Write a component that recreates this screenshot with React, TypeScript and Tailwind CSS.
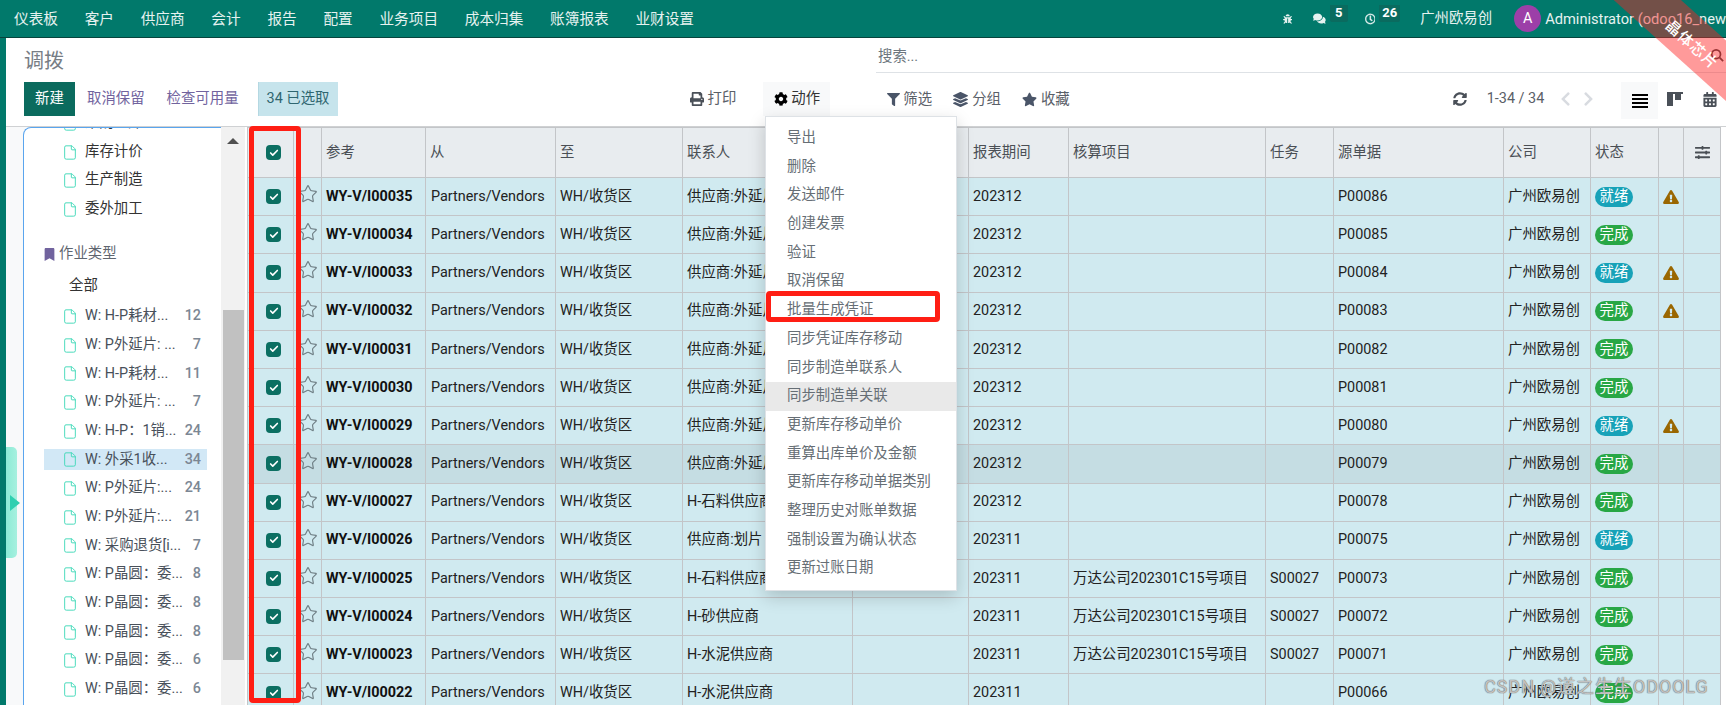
import { File, Star, Check } from 'lucide-react';
import {
  FaBug,
  FaComments,
  FaRegClock,
  FaPrint,
  FaCog,
  FaFilter,
  FaLayerGroup,
  FaStar,
  FaSyncAlt,
  FaChevronLeft,
  FaChevronRight,
  FaCalendarAlt,
  FaExclamationTriangle,
  FaBookmark,
  FaSlidersH,
} from 'react-icons/fa';

const navItems = ['仪表板', '客户', '供应商', '会计', '报告', '配置', '业务项目', '成本归集', '账簿报表', '业财设置'];

const categories = [
  ['W: H-P耗材...', '12'],
  ['W: P外延片: ...', '7'],
  ['W: H-P耗材...', '11'],
  ['W: P外延片: ...', '7'],
  ['W: H-P：1销...', '24'],
  ['W: 外采1收...', '34'],
  ['W: P外延片:...', '24'],
  ['W: P外延片:...', '21'],
  ['W: 采购退货[i...', '7'],
  ['W: P晶圆：委...', '8'],
  ['W: P晶圆：委...', '8'],
  ['W: P晶圆：委...', '8'],
  ['W: P晶圆：委...', '6'],
  ['W: P晶圆：委...', '6'],
];

const menuItems = [
  '导出',
  '删除',
  '发送邮件',
  '创建发票',
  '验证',
  '取消保留',
  '批量生成凭证',
  '同步凭证库存移动',
  '同步制造单联系人',
  '同步制造单关联',
  '更新库存移动单价',
  '重算出库单价及金额',
  '更新库存移动单据类别',
  '整理历史对账单数据',
  '强制设置为确认状态',
  '更新过账日期',
];

const columns = ['', '', '参考', '从', '至', '联系人', '', '报表期间', '核算项目', '任务', '源单据', '公司', '状态', '', ''];

const project = '万达公司202301C15号项目';

type Row = {
  id: string;
  partner: string;
  period: string;
  project?: string;
  task?: string;
  origin: string;
  ready?: boolean;
  warn?: boolean;
  hover?: boolean;
};

const rows: Row[] = [
  { id: 'WY-V/I00035', partner: '供应商:外延片', period: '202312', origin: 'P00086', ready: true, warn: true },
  { id: 'WY-V/I00034', partner: '供应商:外延片', period: '202312', origin: 'P00085' },
  { id: 'WY-V/I00033', partner: '供应商:外延片', period: '202312', origin: 'P00084', ready: true, warn: true },
  { id: 'WY-V/I00032', partner: '供应商:外延片', period: '202312', origin: 'P00083', warn: true },
  { id: 'WY-V/I00031', partner: '供应商:外延片', period: '202312', origin: 'P00082' },
  { id: 'WY-V/I00030', partner: '供应商:外延片', period: '202312', origin: 'P00081' },
  { id: 'WY-V/I00029', partner: '供应商:外延片', period: '202312', origin: 'P00080', ready: true, warn: true },
  { id: 'WY-V/I00028', partner: '供应商:外延片', period: '202312', origin: 'P00079', hover: true },
  { id: 'WY-V/I00027', partner: 'H-石料供应商', period: '202312', origin: 'P00078' },
  { id: 'WY-V/I00026', partner: '供应商:划片', period: '202311', origin: 'P00075', ready: true },
  { id: 'WY-V/I00025', partner: 'H-石料供应商', period: '202311', project, task: 'S00027', origin: 'P00073' },
  { id: 'WY-V/I00024', partner: 'H-砂供应商', period: '202311', project, task: 'S00027', origin: 'P00072' },
  { id: 'WY-V/I00023', partner: 'H-水泥供应商', period: '202311', project, task: 'S00027', origin: 'P00071' },
  { id: 'WY-V/I00022', partner: 'H-水泥供应商', period: '202311', origin: 'P00066' },
];

function CheckBox() {
  return (
    <div className="ml-[18px] w-[15px] h-[15px] rounded-[4px] bg-[#0b6f62] flex items-center justify-center">
      <Check className="w-[10px] h-[10px] text-white" strokeWidth={4} />
    </div>
  );
}

function SideRow({ name, count, active }: { name: string; count: string; active: boolean }) {
  return (
    <div className="h-[28.7px] flex items-center pl-[20px] pr-[14px]">
      <div className={`h-[21px] w-full flex items-center pl-[20px] pr-[6px] ${active ? 'bg-[#d2e8f6]' : ''}`}>
        <File className="w-[16px] h-[17px] shrink-0 -ml-[2px] text-[#3fd8b8]" strokeWidth={1.4} />
        <span className="ml-[7px] pb-[1px] flex-1 whitespace-nowrap text-[#48505a]">{name}</span>
        <span className="pb-[1px] font-medium text-[#7c8794]">{count}</span>
      </div>
    </div>
  );
}

function Sidebar() {
  return (
    <div className="w-[241px] shrink-0 flex bg-[#f8f9fa] overflow-hidden">
      <div className="ml-[17px] w-[199px] bg-white border-l border-t border-[#5aa5ee] rounded-tl-[8px] overflow-hidden">
        <div className="-mt-[19px]">
          <div className="h-[28.7px] flex items-center pl-[38px] gap-[7px]">
            <File className="w-[16px] h-[17px] text-[#3fd8b8]" strokeWidth={1.4} />
            <span className="pb-[1px] text-[#333]">采购入库</span>
          </div>
          {['库存计价', '生产制造', '委外加工'].map((t) => (
            <div key={t} className="h-[28.7px] flex items-center pl-[38px] gap-[7px]">
              <File className="w-[16px] h-[17px] text-[#3fd8b8]" strokeWidth={1.4} />
              <span className="pb-[1px] text-[#333]">{t}</span>
            </div>
          ))}
        </div>
        <div className="mt-[16px] h-[28.7px] flex items-center pl-[20px] text-[#5f6670]">
          <FaBookmark className="w-[11px] h-[13px] text-[#71639e]" />
          <span className="ml-[4px] pb-[1px]">作业类型</span>
        </div>
        <div className="mt-[4px] h-[28.7px] flex items-center pl-[45px] pb-[1px] text-[#333]">全部</div>
        <div className="mt-[1px]">
          {categories.map(([name, count], i) => (
            <SideRow key={i} name={name} count={count} active={i === 5} />
          ))}
        </div>
      </div>
      <div className="w-[24px] shrink-0 bg-[#f1f1f1] flex flex-col items-center">
        <div className="mt-[11px] w-0 h-0 border-x-[6px] border-x-transparent border-b-[6px] border-b-[#505050]" />
        <div className="mt-[166px] w-[21px] h-[350px] bg-[#c1c1c1]" />
      </div>
      <div className="w-[2px] shrink-0 bg-white" />
    </div>
  );
}

function StockTable() {
  return (
    <table className="table-fixed border-collapse w-[1473px] text-[#222]">
      <colgroup>
        <col className="w-[46px]" />
        <col className="w-[28px]" />
        <col className="w-[104px]" />
        <col className="w-[130px]" />
        <col className="w-[127px]" />
        <col className="w-[170px]" />
        <col className="w-[116px]" />
        <col className="w-[100px]" />
        <col className="w-[197px]" />
        <col className="w-[68px]" />
        <col className="w-[170px]" />
        <col className="w-[87px]" />
        <col className="w-[68px]" />
        <col className="w-[25px]" />
        <col className="w-[37px]" />
      </colgroup>
      <thead>
        <tr className="h-[50px] bg-[#e8ecef]">
          {columns.map((c, i) => (
            <th key={i} className={`border border-[#c3c5c8] text-left font-normal text-[#4a4f55] ${i === 0 ? '' : 'px-[4px]'}`}>
              {i === 0 && <CheckBox />}
              {i === 14 && <FaSlidersH className="w-[15px] h-[15px] mx-auto text-[#4a4f55]" />}
              {c}
            </th>
          ))}
        </tr>
      </thead>
      <tbody>
        {rows.map((r) => (
          <tr key={r.id} className={`h-[38.2px] ${r.hover ? 'bg-[#c5dde3]' : 'bg-[#d0eaf0]'}`}>
            <td className="border border-[#c3c5c8]">
              <CheckBox />
            </td>
            <td className="border border-[#c3c5c8]">
              <Star className="w-[20px] h-[20px] mx-auto -mt-[5px] text-[#6f7f85]" strokeWidth={1.4} />
            </td>
            <td className="border border-[#c3c5c8] px-[4px] font-bold text-[#111] whitespace-nowrap">{r.id}</td>
            <td className="border border-[#c3c5c8] px-[5px] whitespace-nowrap">Partners/Vendors</td>
            <td className="border border-[#c3c5c8] px-[4px] whitespace-nowrap">WH/收货区</td>
            <td className="border border-[#c3c5c8] px-[4px] whitespace-nowrap">{r.partner}</td>
            <td className="border border-[#c3c5c8]" />
            <td className="border border-[#c3c5c8] px-[4px]">{r.period}</td>
            <td className="border border-[#c3c5c8] px-[4px] whitespace-nowrap">{r.project}</td>
            <td className="border border-[#c3c5c8] px-[4px]">{r.task}</td>
            <td className="border border-[#c3c5c8] px-[4px]">{r.origin}</td>
            <td className="border border-[#c3c5c8] px-[4px] whitespace-nowrap">广州欧易创</td>
            <td className="border border-[#c3c5c8] px-[4px]">
              <span
                className={`inline-flex items-center justify-center w-[38px] h-[20px] rounded-full text-white ${
                  r.ready ? 'bg-[#17a2b8]' : 'bg-[#28a745]'
                }`}
              >
                {r.ready ? '就绪' : '完成'}
              </span>
            </td>
            <td className="border border-[#c3c5c8]">
              {r.warn && <FaExclamationTriangle className="w-[16px] h-[14px] mx-auto text-[#9a6700]" />}
            </td>
            <td className="border border-[#c3c5c8]" />
          </tr>
        ))}
      </tbody>
    </table>
  );
}

export default function App() {
  return (
    <div className="relative w-screen h-screen overflow-hidden flex flex-col bg-white text-[14.4px] font-['Roboto','Noto_Sans_CJK_SC',sans-serif]">
      {/* Top navbar */}
      <div className="h-[38px] shrink-0 flex items-center bg-[#01796b] border-b border-[#07443d] text-[#e6f2f0]">
        <div className="flex-1 min-w-0 flex items-center gap-[26.7px] pl-[14px] text-[14.67px] whitespace-nowrap">
          {navItems.map((n) => (
            <span key={n}>{n}</span>
          ))}
        </div>
        <div className="w-[443px] shrink-0 overflow-hidden flex items-center whitespace-nowrap">
          <FaBug className="w-[14px] h-[14px]" />
          <FaComments className="ml-[21px] w-[19px] h-[17px]" />
          <span className="ml-[4px] -mt-[12px] px-[5px] h-[18px] rounded-[2px] bg-[#0a6b5f] text-[13px] font-bold leading-[18px] text-white">5</span>
          <FaRegClock className="ml-[17px] w-[16px] h-[16px]" strokeWidth={14} />
          <span className="ml-[4px] -mt-[12px] px-[3px] h-[18px] rounded-[2px] bg-[#0a6b5f] text-[13px] font-bold leading-[18px] text-white">26</span>
          <span className="ml-[20px]">广州欧易创</span>
          <div className="ml-[22px] w-[27px] h-[27px] shrink-0 rounded-full bg-[#9c3fa8] flex items-center justify-center text-white">A</div>
          <span className="ml-[4px] text-[14.67px]">Administrator (odoo16_new</span>
        </div>
      </div>

      <div className="flex-1 min-h-0 flex">
        <div className="w-[6px] shrink-0 bg-[#01796b]" />
        <div className="flex-1 min-w-0 flex flex-col">
          {/* Control panel */}
          <div className="h-[89px] shrink-0 flex flex-col border-b border-[#cfd1d3]">
            <div className="h-[44px] flex">
              <div className="w-[870px] pl-[18px] pt-[9px] text-[20px] leading-[28px] text-[#777d85]">调拨</div>
              <div className="flex-1 h-[34.5px] flex items-center justify-between border-b border-[#dee2e6] text-[#6c757d] pr-[2px]">
                <span className="pl-[2px] pt-[4px]">搜索...</span>
                <svg viewBox="0 0 16 16" className="w-[14px] h-[14px] text-[#444]" fill="none" stroke="currentColor" strokeWidth="2">
                  <circle cx="7" cy="7" r="5" />
                  <path d="M11 11l4 4" />
                </svg>
              </div>
            </div>
            <div className="h-[37px] flex items-start">
              <div className="ml-[18px] w-[51px] h-[34px] flex items-center justify-center bg-[#0b6b5e] text-white">新建</div>
              <div className="h-[34px] flex items-center px-[12px] text-[#71639e]">取消保留</div>
              <div className="h-[34px] flex items-center px-[10px] text-[#71639e]">检查可用量</div>
              <div className="ml-[9px] w-[80px] h-[34px] flex items-center justify-center bg-[#c6e4ec] border-l border-[#b4d8e2] text-[#2f6670]">34 已选取</div>

              <div className="ml-[352px] h-[34px] flex items-center gap-[4px] text-[#5a6068]">
                <FaPrint className="w-[14px] h-[14px] text-[#4a5058]" />
                <span>打印</span>
              </div>
              <div className="ml-[27px] w-[67px] h-[34px] flex items-center pl-[11px] gap-[3px] bg-[#f8f9fa] text-[#333]">
                <FaCog className="w-[14px] h-[14px] text-black" />
                <span>动作</span>
              </div>
              <div className="ml-[57px] h-[34px] pt-[1px] flex items-center gap-[3px] text-[#5a6068]">
                <FaFilter className="w-[13px] h-[13px] text-[#4a5568]" />
                <span>筛选</span>
              </div>
              <div className="ml-[21px] h-[34px] pt-[1px] flex items-center gap-[4px] text-[#5a6068]">
                <FaLayerGroup className="w-[15px] h-[15px] text-[#4a5568]" />
                <span>分组</span>
              </div>
              <div className="ml-[21px] h-[34px] pt-[1px] flex items-center gap-[4px] text-[#5a6068]">
                <FaStar className="w-[15px] h-[15px] text-[#4a5568]" />
                <span>收藏</span>
              </div>

              <div className="ml-[383px] h-[34px] flex items-center">
                <FaSyncAlt className="w-[14px] h-[14px] text-[#4a5058]" />
                <span className="ml-[20px] text-[#5a6068]">1-34 / 34</span>
                <FaChevronLeft className="ml-[16px] w-[11px] h-[16px] text-[#d8dbe0]" />
                <FaChevronRight className="ml-[12px] w-[11px] h-[16px] text-[#d8dbe0]" />
              </div>
              <div className="ml-[27px] w-[37px] h-[37px] flex items-center justify-center bg-[#f8f9fa]">
                <div className="w-[16px] flex flex-col gap-[2px]">
                  <div className="h-[2px] bg-black" />
                  <div className="h-[2px] bg-black" />
                  <div className="h-[2px] bg-black" />
                  <div className="h-[2px] bg-black" />
                </div>
              </div>
              <svg viewBox="0 0 16 14" className="ml-[9px] mt-[10px] w-[16px] h-[14px] text-[#4a5058]" fill="currentColor">
                <path d="M0 0h16v2H0zM0 2h6v12H0zM8 2h6v6H8z" />
              </svg>
              <FaCalendarAlt className="ml-[20px] mt-[10px] w-[14px] h-[15px] text-[#4a5058]" />
            </div>
          </div>

          <div className="flex-1 min-h-0 flex overflow-hidden">
            <Sidebar />
            <div className="flex-1 min-w-0 overflow-hidden">
              <StockTable />
            </div>
          </div>
        </div>
      </div>

      {/* Action dropdown */}
      <div className="absolute left-[765px] top-[116px] w-[192px] py-[7px] bg-white border border-[#dee2e6] shadow-[0_6px_16px_rgba(0,0,0,0.18)] text-[#666e75]">
        {menuItems.map((m) => (
          <div key={m} className={`h-[28.7px] flex items-center pl-[21px] pb-[1px] ${m === '同步制造单关联' ? 'bg-[#e9e9e9]' : ''}`}>
            {m}
          </div>
        ))}
      </div>

      {/* Sidebar toggle tab */}
      <div className="absolute left-[6px] top-[447px] w-[11px] h-[111px] rounded-r-[5px] bg-gradient-to-r from-[#8cebd6] to-[#a5f0df] flex items-center">
        <div className="ml-[4px] w-0 h-0 border-y-[8px] border-y-transparent border-l-[10px] border-l-[#2ecfb0]" />
      </div>

      {/* Red annotations */}
      <div className="absolute left-[249px] top-[126px] w-[52px] h-[577px] border-[5px] border-[#ff1e14] rounded-[4px]" />
      <div className="absolute left-[766px] top-[291px] w-[174px] h-[31px] border-[5px] border-[#ff1e14] rounded-[4px]" />

      {/* Corner ribbon */}
      <div className="absolute left-[1539px] top-[15px] w-[300px] h-[45px] pt-[8px] pl-[14px] rotate-[42deg] bg-[rgba(255,30,30,0.45)] flex items-center justify-center text-white text-[15px] font-medium tracking-[1px]">
        晶体芯片
      </div>

      {/* CSDN watermark */}
      <div className="absolute left-[1484px] top-[673px] text-[18px] tracking-[0.9px] whitespace-nowrap text-[rgba(255,255,255,0.6)] [text-shadow:0_0_1px_#666,0_0_1px_#666]">
        CSDN @道之生生ODOOLG
      </div>
    </div>
  );
}
